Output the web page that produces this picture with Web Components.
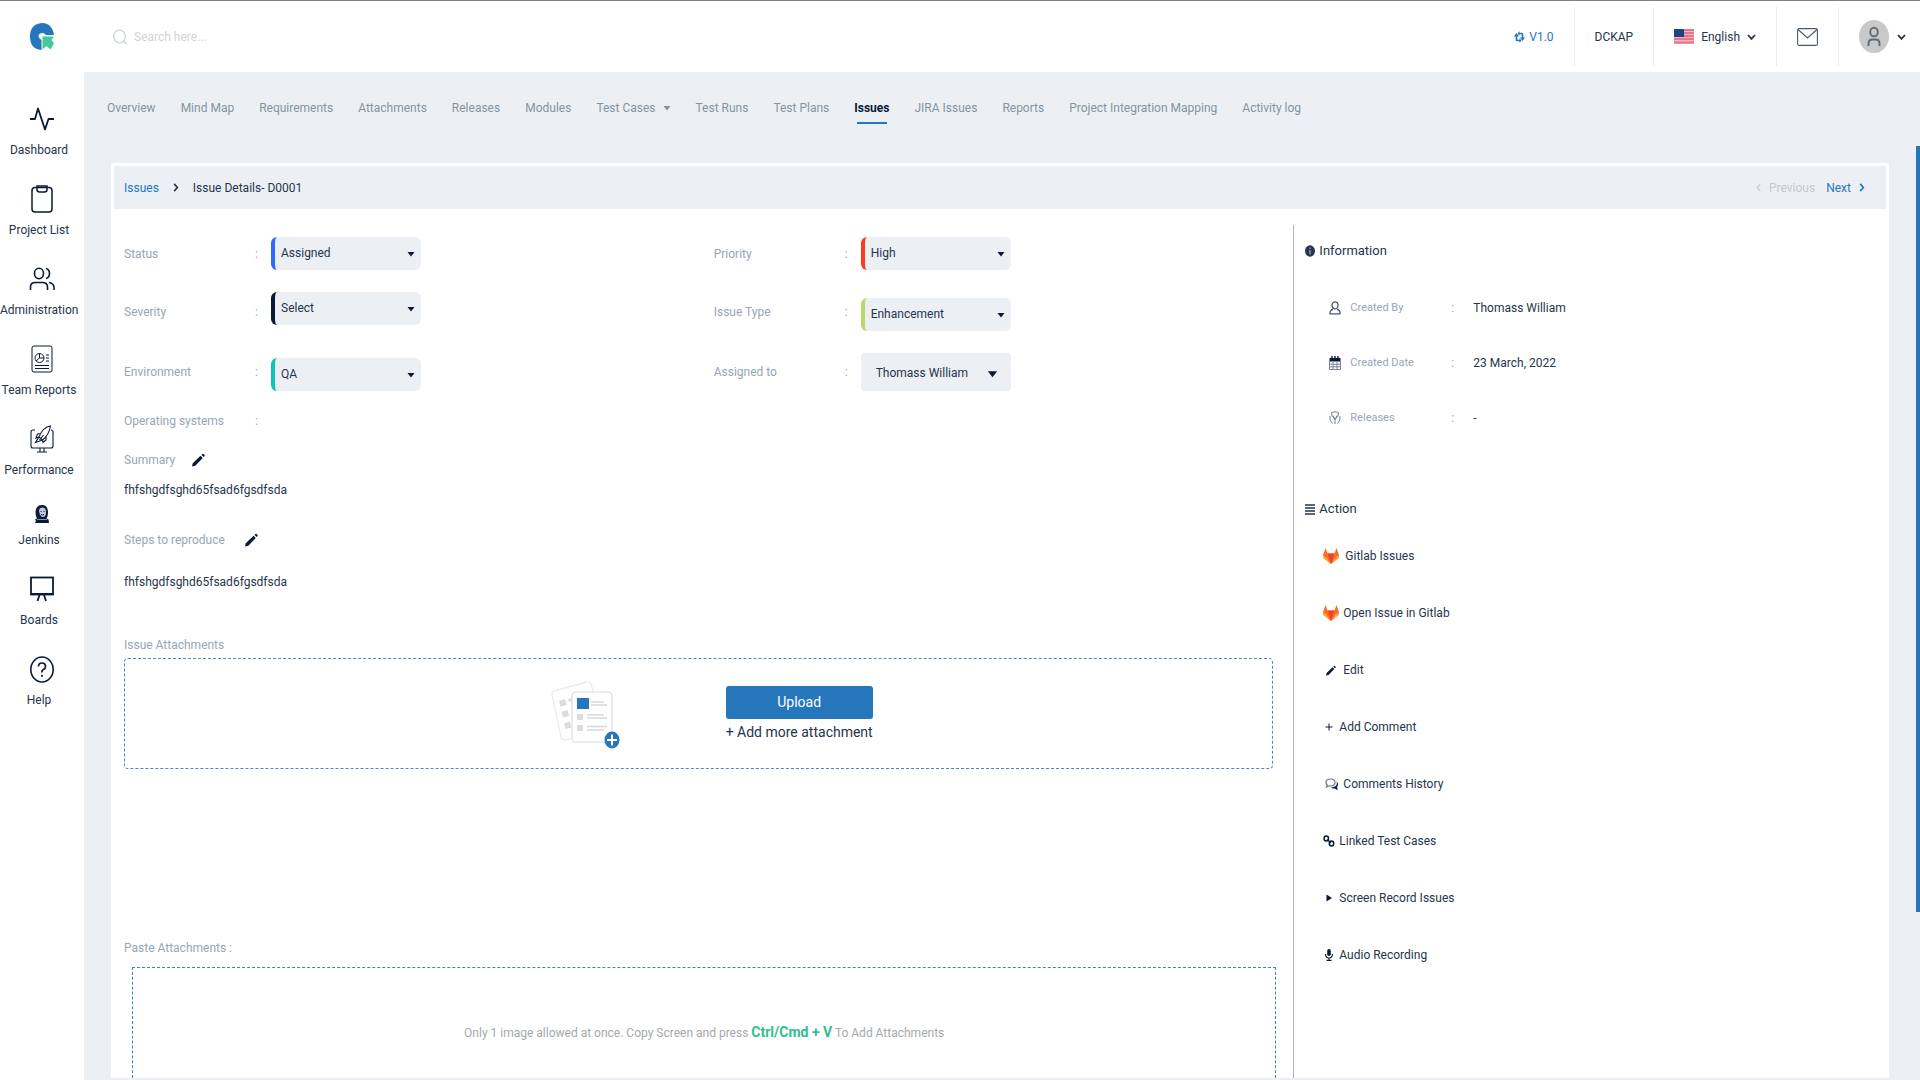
<!DOCTYPE html>
<html lang="en">
<head>
<meta charset="utf-8">
<title>Issue Details</title>
<style>
  body {
    margin: 0;
    font-family: Roboto, "Liberation Sans", sans-serif;
    font-size: 12px;
    line-height: 20px;
    color: #26344d;
    --bg: #ecf0f4;
    --blue: #2676bc;
    --muted: #98a6b5;
    --dark: #0b1a36;
  }
</style>
</head>
<body>

<app-shell>
  <app-header slot="header"></app-header>

  <side-nav slot="nav">
    <nav-item icon="pulse">Dashboard</nav-item>
    <nav-item icon="clipboard">Project List</nav-item>
    <nav-item icon="users">Administration</nav-item>
    <nav-item icon="report">Team Reports</nav-item>
    <nav-item icon="rocket">Performance</nav-item>
    <nav-item icon="jenkins" small>Jenkins</nav-item>
    <nav-item icon="board">Boards</nav-item>
    <nav-item icon="help">Help</nav-item>
  </side-nav>

  <tab-bar>
    <tab-item>Overview</tab-item>
    <tab-item>Mind Map</tab-item>
    <tab-item>Requirements</tab-item>
    <tab-item>Attachments</tab-item>
    <tab-item>Releases</tab-item>
    <tab-item>Modules</tab-item>
    <tab-item caret>Test Cases</tab-item>
    <tab-item>Test Runs</tab-item>
    <tab-item>Test Plans</tab-item>
    <tab-item active>Issues</tab-item>
    <tab-item>JIRA Issues</tab-item>
    <tab-item>Reports</tab-item>
    <tab-item>Project Integration Mapping</tab-item>
    <tab-item>Activity log</tab-item>
  </tab-bar>

  <issue-card>
    <issue-form slot="form">
      <select-field label="Status" value="Assigned" color="#2e6bff"></select-field>
      <select-field label="Priority" value="High" color="#ff3b1d"></select-field>
      <select-field label="Severity" value="Select" color="#0b1a36" place="start"></select-field>
      <select-field label="Issue Type" value="Enhancement" color="#b5d96b" place="end"></select-field>
      <select-field label="Environment" value="QA" color="#12c2b6" place="end"></select-field>
      <select-field label="Assigned to" value="Thomass William" large place="start"></select-field>
    </issue-form>

    <side-section slot="aside" icon="info" heading="Information">
      <info-row icon="person" label="Created By">Thomass William</info-row>
      <info-row icon="calendar" label="Created Date">23 March, 2022</info-row>
      <info-row icon="release" label="Releases">-</info-row>
    </side-section>
    <side-section slot="aside" icon="bars" heading="Action">
      <action-item icon="gitlab" wide>Gitlab Issues</action-item>
      <action-item icon="gitlab">Open Issue in Gitlab</action-item>
      <action-item icon="pencil">Edit</action-item>
      <action-item icon="plus" narrow>Add Comment</action-item>
      <action-item icon="comments">Comments History</action-item>
      <action-item icon="link" narrow>Linked Test Cases</action-item>
      <action-item icon="play" narrow>Screen Record Issues</action-item>
      <action-item icon="mic" narrow>Audio Recording</action-item>
    </side-section>
  </issue-card>
</app-shell>

<script>
// name: [viewBox, width, height, markup]
const ICONS = {
  pulse: ['0 0 24 24', 24, 24, '<path d="M0 12h5L8 1.500l7 21L18.500 12H24" fill="none" stroke="currentColor" stroke-width="1.800" stroke-linejoin="round"/>'],
  clipboard: ['0 0 22 28', 22, 28, '<g fill="none" stroke="currentColor" stroke-width="1.500"><rect x="1" y="2.500" width="20" height="24.500" rx="3"/><path d="M6 1h10v3.500q0 2.500-2.500 2.500h-5Q6 7 6 4.500z"/></g>'],
  users: ['0 0 26 24', 26, 24, '<g fill="none" stroke="currentColor" stroke-width="1.600"><ellipse cx="10" cy="6.500" rx="4.500" ry="5.200"/><path d="M1.500 23v-3q0-4.500 5-4.500h7q5 0 5 4.500v3M17 1.500q3.500 1 3.500 5t-3.500 5M20 15.500q5 1 5 5V23"/></g>'],
  report: ['0 0 22 28', 22, 28, '<g fill="none" stroke="currentColor" stroke-width="1"><rect x="1" y="1" width="20" height="26" rx="2"/><circle cx="8.500" cy="13" r="4.500"/><path d="M8.500 8.500V13L5 16M8.500 13h4.500M15 10h3M15 13h3M15 16h3M4 20.500h14M4 23.500h14"/></g>'],
  rocket: ['0 0 24 28', 24, 28, '<g fill="none" stroke="currentColor" stroke-width="1.100"><path d="M5 5H3Q1 5 1 7v14q0 2 2 2h18q2 0 2-2V7q0-2-2-2M10 23v4M14 23v4M7 27h10"/><path d="M20.500 1Q13 2 9 12l3.500 3Q19 10 20.500 1zM11 8.500L7.500 9 6 13l3-1M16 11v4l-3 2.500-.5-3M9 12l-3.500 5.500 7-2.500M9.500 15l4-5"/></g>'],
  jenkins: ['0 0 16 18', 16, 18, '<path d="M2 16L1 18h14l-.5-3.500-2-1Q14 11 14 7.500 14 0 8 0T1.500 7q0 4 1.500 6.500L1 14.500z" fill="currentColor"/><path d="M5 6q0-3.500 3.500-3.500T12 7q0 5-3 5T5 6z" fill="#c3ccd6"/><path d="M6.500 6.500h1M9.500 6.500h1M7 9.500q1.500 1 3 0" stroke="currentColor" fill="none"/><path d="M3 14.500h10" stroke="#8794a5"/>'],
  board: ['0 0 24 26', 24, 26, '<g fill="none" stroke="currentColor" stroke-width="1.800"><rect x="1" y="1.500" width="22" height="17"/><path d="M9.500 19l-2 6M14 19l2 6M1 18h22"/></g>'],
  help: ['0 0 24 27', 24, 27, '<ellipse cx="12" cy="13.500" rx="11.200" ry="12.500" fill="none" stroke="currentColor" stroke-width="1.600"/><path d="M8.500 10.500Q8.500 7 12 7t3.500 3.500q0 2-2 3T12 16.500" fill="none" stroke="currentColor" stroke-width="1.700"/><circle cx="12" cy="19.800" r="1.100" fill="currentColor"/>'],
  search: ['0 0 14 16', 14, 16, '<g fill="none" stroke="currentColor" stroke-width="1.200"><ellipse cx="6.500" cy="7.500" rx="5.800" ry="6.500"/><path d="M10.500 12l2.800 3"/></g>'],
  refresh: ['0 0 11 12', 11, 12, '<path d="M2.500 4.500v4q0 1 1 1H6M8.500 7.500v-4q0-1-1-1H5" fill="none" stroke="currentColor" stroke-width="1.700"/><path d="M0 5.500L2.500 2 5 5.500zM6 6.500L8.500 10 11 6.500zM5.500 7.200v4.600L7.500 9.500zM5.500.2v4.600L3.500 2.500z" fill="currentColor"/>'],
  flag: ['0 0 20 15', 20, 15, '<path fill="#f4b3bd" d="M0 0h20v15H0z"/><path d="M0 1h20M0 4h20M0 7h20M0 10h20M0 13.500h20" stroke="#e5758a" stroke-width="2.200"/><path fill="#1c4583" d="M0 0h10v8H0z"/>'],
  mail: ['0 0 21 18', 21, 18, '<g fill="none" stroke="currentColor" stroke-width="1.100"><rect x=".6" y=".6" width="19.800" height="16.800" rx="1.500"/><path d="M1 1.500l9.500 8.500L20 1.500"/></g>'],
  avatar: ['0 0 30 33', 30, 33, '<ellipse cx="15" cy="16.500" rx="15" ry="16.500" fill="#c9c9c9"/><g fill="none" stroke="#5f6b78" stroke-width="1.900"><ellipse cx="15" cy="12" rx="3.800" ry="4.300"/><path d="M9.500 26v-2.500q0-4 4-4h3q4 0 4 4V26"/></g>'],
  down: ['0 0 9 8', 9, 8, '<path d="M1 2l3.500 3.800L8 2" fill="none" stroke="currentColor" stroke-width="1.800"/>'],
  left: ['0 0 6 10', 5, 9, '<path d="M5 1L1.500 5 5 9" fill="none" stroke="currentColor" stroke-width="1.500"/>'],
  right: ['0 0 6 10', 6, 9, '<path d="M1 1l3.500 4L1 9" fill="none" stroke="currentColor" stroke-width="1.800"/>'],
  caret: ['0 0 8 6', 8, 6, '<path d="M.5 1h7L4 5.500z" fill="currentColor"/>'],
  pencil: ['0 0 14 14', 13, 14, '<path d="M0 14l.8-3.600 8.400-8 2.400 2.400-8 8.400zM10.200 1.600L11.300.6q.6-.5 1.200 0l1 1q.5.6 0 1.200l-1 1z" fill="currentColor"/>'],
  info: ['0 0 10 12', 10, 12, '<ellipse cx="5" cy="6" rx="5" ry="5.700" fill="currentColor"/><path d="M5 5v4.500M5 2.500v1.400" stroke="#8ea0b5" stroke-width="1.300"/>'],
  bars: ['0 0 10 11', 10, 11, '<path d="M0 1h10M0 4h10M0 7h10M0 10h10" stroke="currentColor" stroke-width="1.700"/>'],
  person: ['0 0 12 14', 12, 14, '<g fill="none" stroke="#4b586b" stroke-width="1.300"><ellipse cx="6" cy="4.300" rx="3" ry="3.500"/><path d="M4 8.500q-3 0-3 4.300h10q0-4.300-3-4.300"/></g>'],
  calendar: ['0 0 12 14', 12, 14, '<path d="M.5 2h11v3.500H.5z" fill="currentColor"/><path d="M.5 5v8.500h11V5M.5 8.200h11M.5 10.800h11M4 5v8.500M8 5v8.500" fill="none" stroke="#7a8493"/><path d="M3 0v3M6 0v3M9 0v3" stroke="currentColor" stroke-width="1.400"/>'],
  release: ['0 0 12 14', 12, 14, '<g fill="none" stroke="#7a8493"><path d="M2.500 1.500q3.500-1.500 7 0 .5 4-3.500 7-4-3-3.500-7zM6 8.500V13M4 4.500l2 4 2-4M1 5Q0 9 3.500 12.500M11 5q1 4-2.500 7.500"/></g>'],
  gitlab: ['0 0 16 16', 16, 16, '<path d="M8 16L.5 10 0 7 2.500 0l2 5.500h7l2-5.500L16 7l-.5 3z" fill="#fc6d26"/><path d="M8 16L4.500 5.500h7z" fill="#f0442a"/><path d="M8 16L.5 10 0 7.500 3 9zM8 16l7.500-6 .5-2.500L13 9z" fill="#fca63a"/>'],
  plus: ['0 0 10 10', 10, 10, '<path d="M1.500 5h7M5 1.500v7" stroke="currentColor" stroke-width="1"/>'],
  comments: ['0 0 13 12', 13, 12, '<path d="M8.500 9Q13 8 11.500 3.500 14.500 6 12 9q0 1.500 1 3-2-.3-3-1.500-3 .3-4-1z" fill="currentColor"/><path d="M5.500 1Q10 1 10 4.500T5.500 8q-1 0-1.500-.2L1.500 9l.8-2Q1 6 1 4.500 1 1 5.500 1z" fill="none" stroke="#6b7788" stroke-width="1.200"/>'],
  link: ['0 0 12 12', 12, 12, '<g fill="none" stroke="currentColor" stroke-width="1.500"><ellipse cx="3.300" cy="3.500" rx="2.200" ry="2.500"/><ellipse cx="8.500" cy="8.500" rx="2.200" ry="2.500"/><path d="M4 4.500L8 8"/></g>'],
  play: ['0 0 6 8', 6, 8, '<path d="M.5.500L6 4 .5 7.500z" fill="currentColor"/>'],
  mic: ['0 0 8 12', 8, 12, '<rect x="2.200" y="0" width="3.600" height="7" rx="1.800" fill="currentColor"/><path d="M.6 5q0 4 3.400 4t3.400-4M4 9v2M1.500 11.400h5" fill="none" stroke="currentColor" stroke-width="1.100"/>'],
  logo: ['0 0 24 27', 24, 27, '<path d="M12 0Q0 1 0 13.500T11.500 27V17Q8.500 15.500 8.500 13t3.500-3q3 0 3.800 2H24Q22 0 12 0z" fill="#2676bc"/><path d="M12.500 13.500H24L21.500 17l2.500 3.500-3.500 6-4-3.500-4 3.500z" fill="#45c79a"/>'],
  files: ['0 0 70 70', 70, 70, '<g stroke="#ebebeb" stroke-width="1.300" fill="#fff"><path d="M3 12L36 3q3-.5 4 2l13 43q0 3-3 4L14 61q-3 0-4-3L1 16q0-3 2-4z"/></g><g fill="#dcdcdc"><path d="M8 22l6-2 1.500 6-6 1.500zM10.500 33l6-2 1.500 6-6 1.500zM13 44.500l6-2 1.500 6-6 1.500zM17 20l5-1v3l-4 1z"/></g><rect x="21" y="13" width="40" height="50" rx="4" fill="#fff" stroke="#e6e6e6" stroke-width="1.600"/><path d="M26 19h12v11H26z" fill="#2676bc"/><path d="M40 23h13M40 26h16M36 36h17M36 39h20M36 47.500h20M36 51h17" stroke="#d8d8d8" stroke-width="1.600"/><path d="M26 35h6v6h-6zM26 46h6v6h-6z" fill="#dcdcdc"/><ellipse cx="61" cy="61" rx="7.500" ry="8.500" fill="#2676bc"/><path d="M56 61h10M61 55.500v11" stroke="#fff" stroke-width="2"/>'],
};

class BaseElement extends HTMLElement {
  connectedCallback() {
    if (this.shadowRoot) return;
    const template = document.createElement('template');
    template.innerHTML = this.render();
    this.attachShadow({ mode: 'open' }).append(template.content.cloneNode(true));
  }

  attr(name) {
    return this.getAttribute(name) || '';
  }
}

class AppIcon extends BaseElement {
  render() {
    const [box, w, h, body] = ICONS[this.attr('name')];
    return `
      <style>
        :host { display: inline-flex; flex: none; }
        svg { display: block; }
      </style>
      <svg viewBox="${box}" width="${this.attr('width') || w}" height="${this.attr('height') || h}" aria-hidden="true">${body}</svg>
    `;
  }
}

class AppShell extends BaseElement {
  render() {
    return `
      <style>
        :host {
          display: flex;
          flex-direction: column;
          height: 100vh;
          overflow: hidden;
          background: #fff;
        }
        .body { display: flex; flex: 1; min-height: 0; }
        main {
          flex: 1;
          min-width: 0;
          display: flex;
          flex-direction: column;
          padding: 0 27px 2px 27px;
          background: var(--bg);
        }
        .rail { background: var(--bg); width: 4px; padding-top: 74px; }
        .thumb { height: 82%; background: var(--blue); }
      </style>
      <slot name="header"></slot>
      <div class="body">
        <slot name="nav"></slot>
        <main><slot></slot></main>
        <div class="rail"><div class="thumb"></div></div>
      </div>
    `;
  }
}

class AppHeader extends BaseElement {
  render() {
    return `
      <style>
        :host {
          display: flex;
          align-items: center;
          height: 71px;
          border-top: 1px solid #808080;
          background: #fff;
        }
        .logo { width: 84px; display: flex; justify-content: center; }
        .search {
          flex: 1;
          display: flex;
          align-items: center;
          gap: 7px;
          padding-left: 29px;
          color: #c3d2d6;
        }
        input {
          border: 0;
          outline: 0;
          padding: 0;
          width: 240px;
          font: inherit;
          background: none;
        }
        input::placeholder { color: #d3d3d3; }
        .cell {
          display: flex;
          align-items: center;
          height: 59px;
          padding: 0 20px;
          border-right: 1px solid #ececec;
        }
        .cell:last-child { border: 0; padding-right: 14px; }
        button, a {
          display: flex;
          align-items: center;
          gap: 8px;
          border: 0;
          padding: 0;
          background: none;
          font: inherit;
          color: inherit;
          text-decoration: none;
        }
        .version { color: var(--blue); gap: 4px; }
        .lang { gap: 7px; }
        .mail { color: #4b586b; }
      </style>
      <a class="logo" href="#" aria-label="Home"><app-icon name="logo"></app-icon></a>
      <label class="search">
        <app-icon name="search"></app-icon>
        <input type="text" placeholder="Search here..." aria-label="Search">
      </label>
      <div class="cell"><a class="version" href="#"><app-icon name="refresh"></app-icon>V1.0</a></div>
      <div class="cell"><span>DCKAP</span></div>
      <div class="cell"><button class="lang"><app-icon name="flag"></app-icon>English<app-icon name="down"></app-icon></button></div>
      <div class="cell"><button class="mail" aria-label="Messages"><app-icon name="mail"></app-icon></button></div>
      <div class="cell"><button aria-label="Account"><app-icon name="avatar"></app-icon><app-icon name="down"></app-icon></button></div>
    `;
  }
}

class SideNav extends BaseElement {
  render() {
    return `
      <style>
        :host { display: block; flex: none; width: 84px; background: #fff; }
        nav { display: flex; flex-direction: column; gap: 25px; padding-top: 33px; }
      </style>
      <nav><slot></slot></nav>
    `;
  }
}

class NavItem extends BaseElement {
  render() {
    return `
      <style>
        :host { display: block; }
        a {
          display: flex;
          flex-direction: column;
          gap: 7px;
          color: inherit;
          text-decoration: none;
        }
        .icon {
          display: flex;
          align-items: center;
          justify-content: center;
          height: 28px;
          color: var(--dark);
        }
        :host([small]) .icon { height: 18px; }
        .label { padding-right: 6px; text-align: center; white-space: nowrap; }
      </style>
      <a href="#">
        <span class="icon"><app-icon name="${this.attr('icon')}"></app-icon></span>
        <span class="label"><slot></slot></span>
      </a>
    `;
  }
}

class TabBar extends BaseElement {
  render() {
    return `
      <style>
        :host { display: block; }
        nav { display: flex; gap: 25px; height: 65px; margin-left: -4px; padding-top: 26px; }
      </style>
      <nav><slot></slot></nav>
    `;
  }
}

class TabItem extends BaseElement {
  render() {
    return `
      <style>
        :host { display: block; white-space: nowrap; }
        a {
          display: flex;
          flex-direction: column;
          align-items: center;
          color: #8693a1;
          text-decoration: none;
        }
        .text { display: flex; align-items: center; gap: 7px; }
        :host([active]) a { color: var(--dark); font-weight: 700; }
        :host([active]) a::after {
          content: "";
          width: 30px;
          height: 2px;
          margin-top: 4px;
          background: var(--blue);
        }
      </style>
      <a href="#"><span class="text"><slot></slot>${this.hasAttribute('caret') ? '<app-icon name="caret"></app-icon>' : ''}</span></a>
    `;
  }
}

class IssueCard extends BaseElement {
  render() {
    return `
      <style>
        :host {
          display: flex;
          flex-direction: column;
          flex: 1;
          min-height: 0;
          padding: 3px 3px 0;
          border-radius: 3px 3px 0 0;
          background: #fff;
        }
        header {
          display: flex;
          align-items: center;
          justify-content: space-between;
          height: 43px;
          flex: none;
          padding: 0 21px 0 10px;
          background: var(--bg);
        }
        header div { display: flex; align-items: center; gap: 14px; }
        header .pager { gap: 11px; }
        a { color: var(--blue); text-decoration: none; }
        button {
          display: flex;
          align-items: center;
          gap: 8px;
          border: 0;
          padding: 0;
          background: none;
          font: inherit;
          color: var(--blue);
        }
        button:disabled { color: #c5c9cd; }
        .columns { display: grid; grid-template-columns: 199fr 100fr; flex: 1; min-height: 0; }
        aside { margin-top: 16px; border-left: 1px solid #b3b3b3; }
      </style>
      <header>
        <div><a href="#">Issues</a><app-icon name="right"></app-icon><span>Issue Details- D0001</span></div>
        <div class="pager">
          <button disabled><app-icon name="left"></app-icon>Previous</button>
          <button>Next<app-icon name="right"></app-icon></button>
        </div>
      </header>
      <div class="columns">
        <slot name="form"></slot>
        <aside><slot name="aside"></slot></aside>
      </div>
    `;
  }
}

class IssueForm extends BaseElement {
  render() {
    return `
      <style>
        :host {
          display: flex;
          flex-direction: column;
          min-height: 0;
          overflow: hidden;
          padding: 28px 20px 0 10px;
        }
        .fields {
          display: grid;
          grid-template-columns: 1fr 1fr;
          grid-template-rows: 33px 39px 38px;
          gap: 22px 30px;
        }
        .label { color: var(--muted); display: flex; align-items: center; }
        .os { margin-top: 20px; }
        .os span { width: 131px; }
        .summary { margin-top: 19px; gap: 17px; }
        .steps { margin-top: 30px; gap: 20px; }
        .value { margin-top: 10px; }
        .steps + .value { margin-top: 22px; }
        .attach { margin-top: 43px; }
        .paste { margin-top: 169px; }
        button {
          display: flex;
          border: 0;
          padding: 0;
          background: none;
          font: inherit;
          color: var(--dark);
        }
        .drop {
          display: flex;
          align-items: center;
          justify-content: center;
          gap: 105px;
          height: 109px;
          flex: none;
          margin-top: 3px;
          padding-left: 26px;
          border: 1px dashed #4f86c6;
          border-radius: 4px;
        }
        .actions { display: flex; flex-direction: column; gap: 3px; font-size: 14px; }
        .upload {
          height: 33px;
          align-items: center;
          justify-content: center;
          border-radius: 3px;
          background: var(--blue);
          color: #fff;
        }
        .more { color: inherit; line-height: 20px; }
        .canvas {
          flex: 1;
          margin: 9px -3px 0 8px;
          padding-top: 54px;
          border: 1px dashed #3f82c8;
          border-bottom: 0;
          text-align: center;
          color: #a4a9ae;
        }
        strong { font-size: 14px; color: #2fbf93; }
      </style>
      <div class="fields"><slot></slot></div>
      <div class="label os"><span>Operating systems</span>:</div>
      <div class="label summary">Summary<button aria-label="Edit summary"><app-icon name="pencil"></app-icon></button></div>
      <div class="value">fhfshgdfsghd65fsad6fgsdfsda</div>
      <div class="label steps">Steps to reproduce<button aria-label="Edit steps"><app-icon name="pencil"></app-icon></button></div>
      <div class="value">fhfshgdfsghd65fsad6fgsdfsda</div>
      <div class="label attach">Issue Attachments</div>
      <div class="drop">
        <app-icon name="files"></app-icon>
        <div class="actions">
          <button class="upload">Upload</button>
          <button class="more">+ Add more attachment</button>
        </div>
      </div>
      <div class="label paste">Paste Attachments :</div>
      <div class="canvas">Only 1 image allowed at once. Copy Screen and press <strong>Ctrl/Cmd + V</strong> To Add Attachments</div>
    `;
  }
}

class SelectField extends BaseElement {
  render() {
    return `
      <style>
        :host { display: flex; align-items: center; color: var(--muted); }
        label { width: 131px; }
        .colon { width: 16px; }
        .box {
          display: grid;
          align-items: center;
          align-self: ${this.attr('place') || 'center'};
          width: 150px;
          height: 33px;
          box-sizing: border-box;
          border-left: 4px solid ${this.attr('color') || 'var(--bg)'};
          border-radius: 6px;
          background: var(--bg);
          color: var(--dark);
        }
        :host([large]) .box { height: 38px; border-radius: 4px; }
        select, app-icon { grid-area: 1 / 1; }
        select {
          appearance: none;
          border: 0;
          outline: 0;
          width: 100%;
          padding: 0 0 2px 6px;
          background: none;
          font: inherit;
          line-height: 20px;
          color: #26344d;
        }
        :host([large]) select { padding: 2px 0 0 11px; }
        app-icon { justify-self: end; margin-right: 6px; pointer-events: none; }
        :host([large]) app-icon { margin-right: 13px; padding-top: 3px; }
      </style>
      <label for="field">${this.attr('label')}</label>
      <span class="colon">:</span>
      <div class="box">
        <select id="field"><option>${this.attr('value')}</option></select>
        <app-icon name="caret"${this.hasAttribute('large') ? ' width="11" height="8"' : ''}></app-icon>
      </div>
    `;
  }
}

class SideSection extends BaseElement {
  render() {
    return `
      <style>
        :host { display: block; padding: 16px 0 0 11px; }
        h3 {
          display: flex;
          align-items: center;
          gap: 4px;
          margin: 0;
          font-size: 13px;
          font-weight: 400;
        }
        .rows { display: flex; flex-direction: column; padding: 37px 0 55px 18px; gap: 35px; }
        :host([heading="Action"]) .rows { padding-top: 27px; gap: 37px; }
      </style>
      <h3><app-icon name="${this.attr('icon')}"></app-icon>${this.attr('heading')}</h3>
      <div class="rows"><slot></slot></div>
    `;
  }
}

class InfoRow extends BaseElement {
  render() {
    return `
      <style>
        :host { display: flex; align-items: center; padding-left: 6px; }
        .label {
          display: flex;
          align-items: center;
          gap: 9px;
          width: 122px;
          font-size: 11px;
          color: var(--muted);
        }
        .colon { width: 22px; color: var(--muted); }
        app-icon { color: var(--dark); }
      </style>
      <span class="label"><app-icon name="${this.attr('icon')}"></app-icon>${this.attr('label')}</span>
      <span class="colon">:</span>
      <span><slot></slot></span>
    `;
  }
}

class ActionItem extends BaseElement {
  render() {
    const small = this.attr('icon') === 'pencil' ? ' width="10" height="11"' : '';
    return `
      <style>
        :host { display: flex; height: 20px; }
        a { display: flex; align-items: center; color: inherit; text-decoration: none; }
        .icon {
          display: flex;
          justify-content: center;
          width: 16px;
          margin-right: 4px;
          color: var(--dark);
        }
        :host([wide]) .icon { margin-right: 6px; }
        :host([narrow]) .icon { width: 12px; margin-right: 4px; }
      </style>
      <a href="#"><span class="icon"><app-icon name="${this.attr('icon')}"${small}></app-icon></span><slot></slot></a>
    `;
  }
}

customElements.define('app-icon', AppIcon);
customElements.define('app-shell', AppShell);
customElements.define('app-header', AppHeader);
customElements.define('side-nav', SideNav);
customElements.define('nav-item', NavItem);
customElements.define('tab-bar', TabBar);
customElements.define('tab-item', TabItem);
customElements.define('issue-card', IssueCard);
customElements.define('issue-form', IssueForm);
customElements.define('select-field', SelectField);
customElements.define('side-section', SideSection);
customElements.define('info-row', InfoRow);
customElements.define('action-item', ActionItem);
</script>
</body>
</html>
